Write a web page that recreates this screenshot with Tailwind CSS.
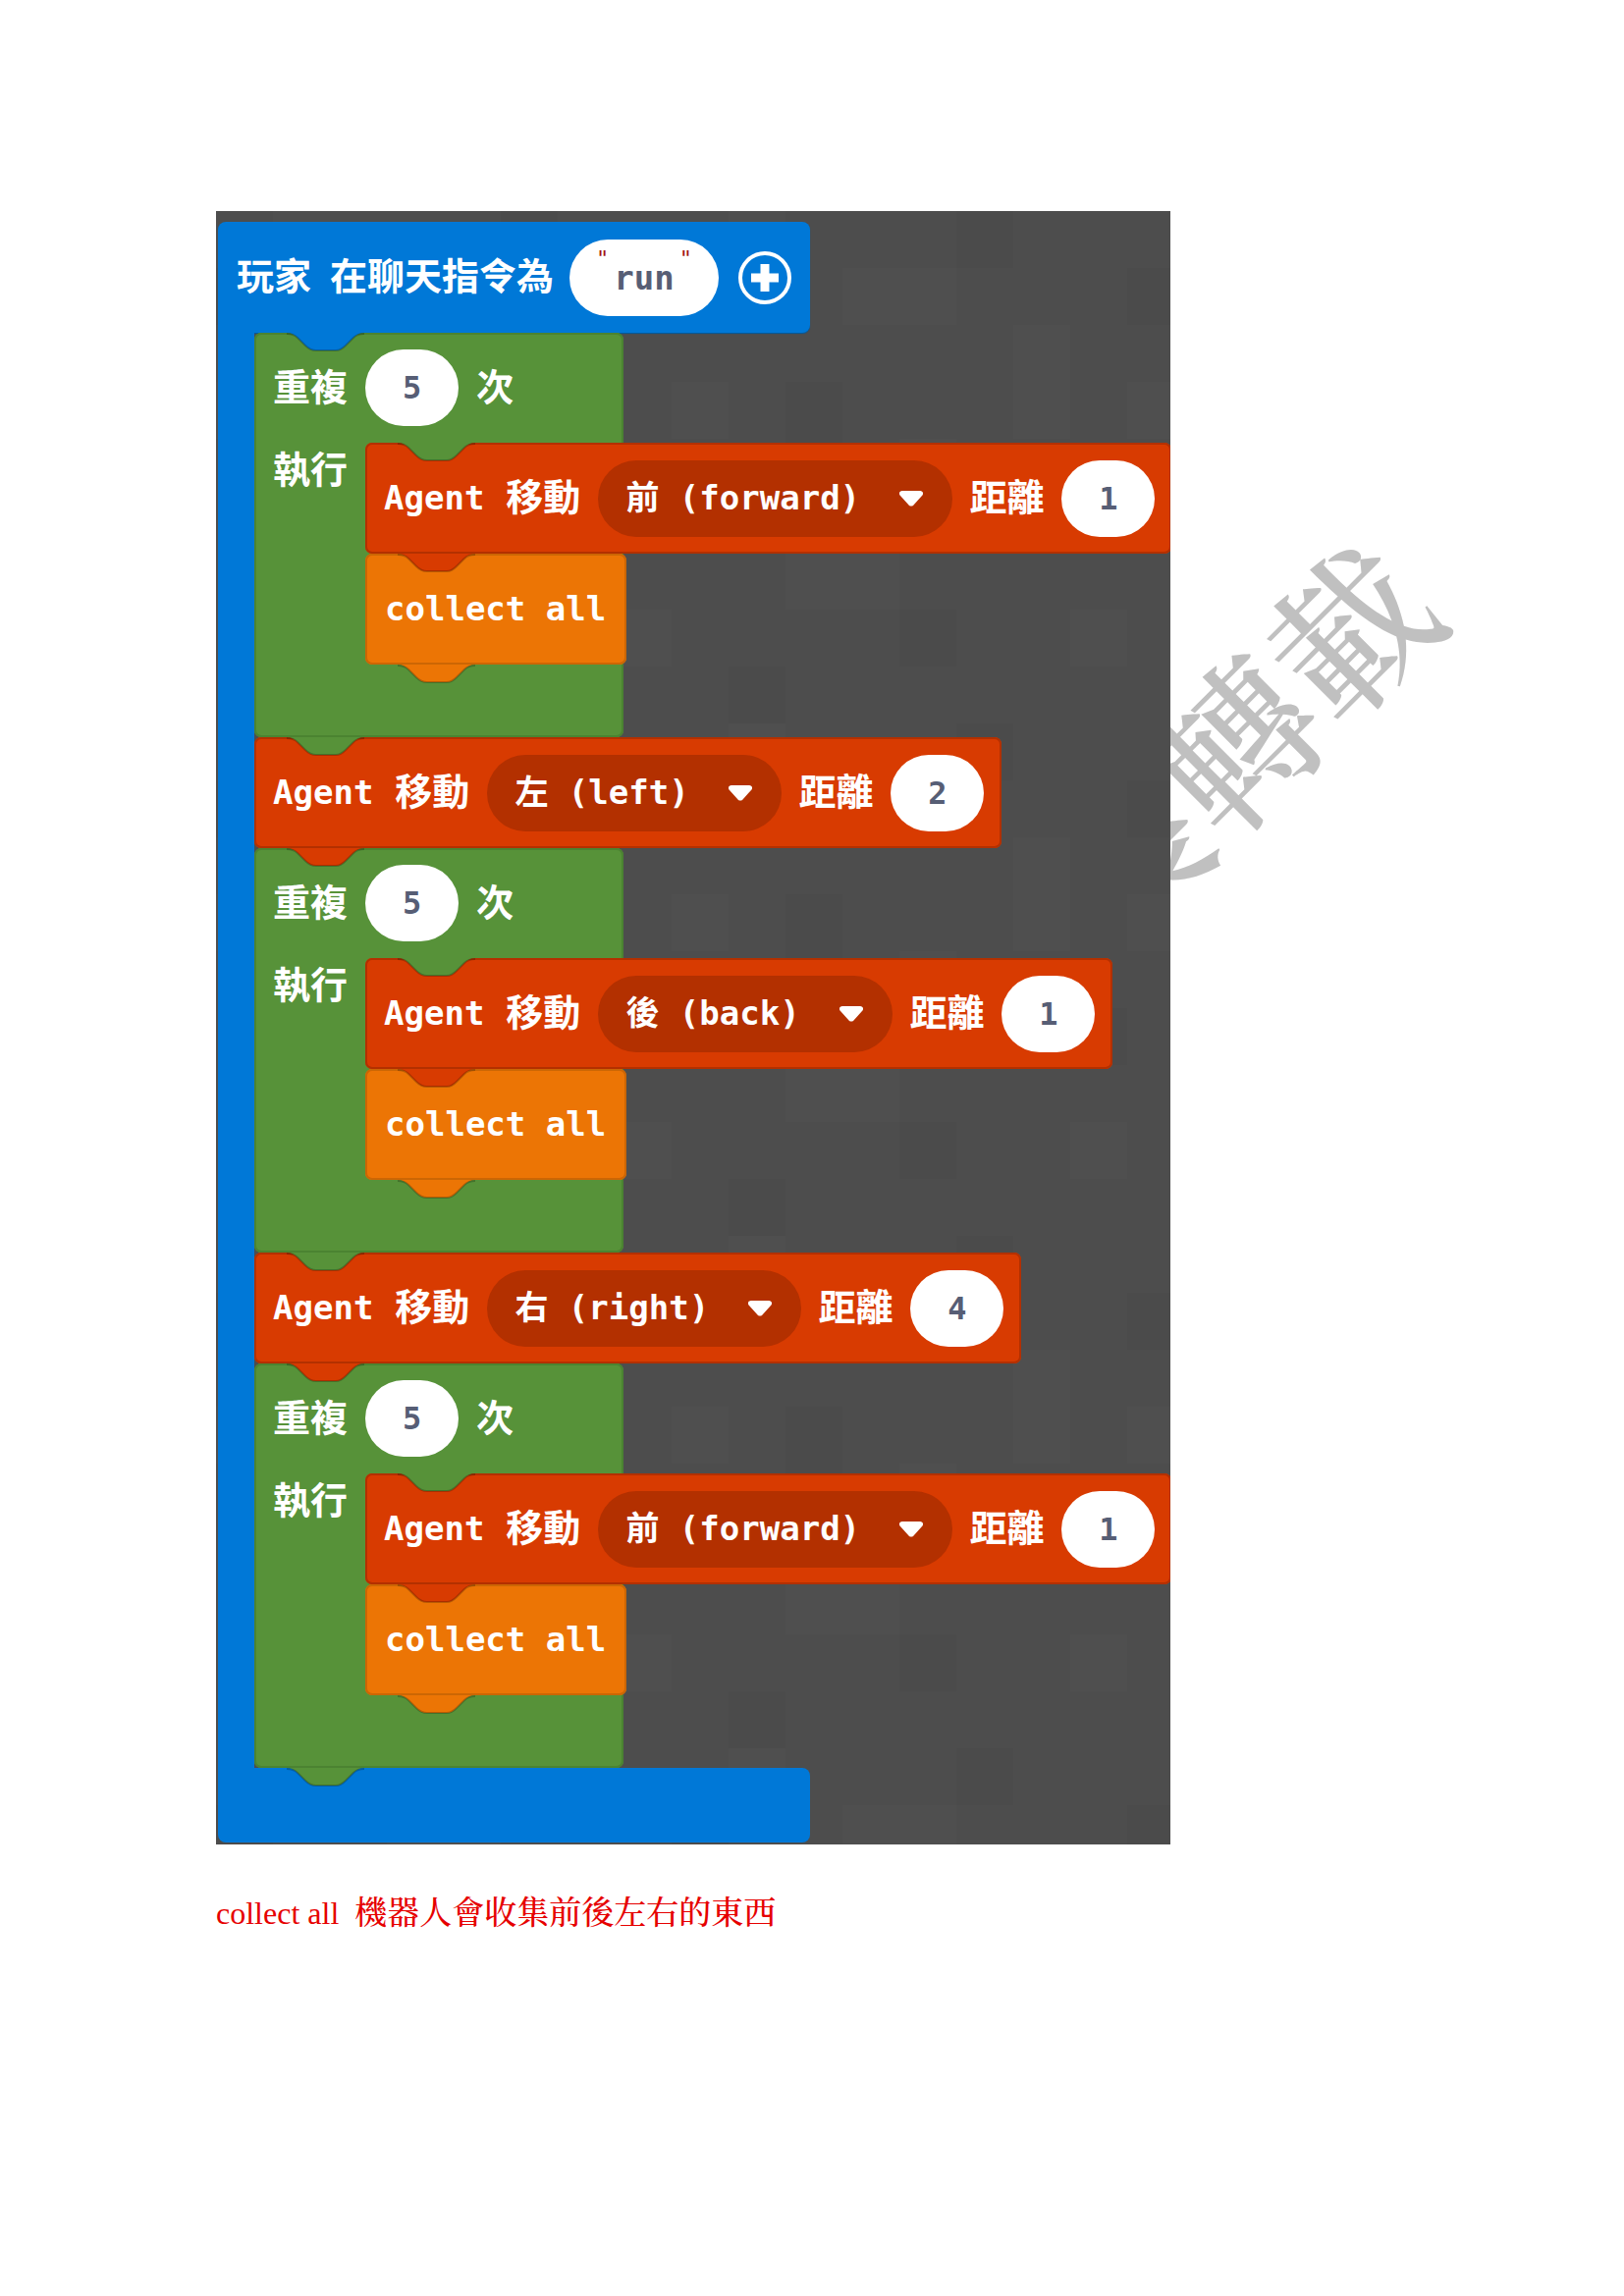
<!DOCTYPE html>
<html lang="zh-Hant">
<head>
<meta charset="utf-8">
<meta name="viewport" content="width=device-width, initial-scale=1">
<title>collect all</title>
<script src="https://cdn.jsdelivr.net/npm/@tailwindcss/browser@4"></script>
</head>
<body class="min-h-screen bg-white">
<svg class="hidden" aria-hidden="true">
  <symbol id="tab" viewBox="0 0 79 20">
    <path d="M0 0C5 0 8 2 11 5L19 13C22 16 25 18 30 18H50C54 18 57 16 60 13L68 5C71 2 74 0 79 0Z"/>
    <path d="M0 1C5 1 8 2 11 5L19 13C22 16 25 18 30 18H50C54 18 57 16 60 13L68 5C71 2 74 1 79 1" fill="none" stroke="#000" stroke-opacity=".22" stroke-width="2"/>
  </symbol>
  <symbol id="caret" viewBox="0 0 24 16">
    <path d="M3 0H21C24 0 25 3 23 5L14 15Q12 16 10 15L1 5C-1 3 0 0 3 0Z"/>
  </symbol>
</svg>
<main class="relative px-[220px] pt-[215px] pb-20">
  <div class="relative max-w-[972px]">
    <p aria-hidden="true" class="absolute left-[790px] top-[457px] w-[489px] -rotate-45 whitespace-nowrap font-['Noto_Serif_CJK_TC','Noto_Sans_CJK_TC',serif] text-[163px] leading-[163px] font-medium text-[#c0c0c0]">製轉載</p>

    <section class="relative overflow-hidden bg-[#4d4d4d] pt-[11px] pb-[2px] pl-[2px] font-['DejaVu_Sans_Mono','Noto_Sans_CJK_TC',monospace] text-[34px] font-bold whitespace-nowrap text-white">
      <svg class="absolute inset-0 h-full w-full" aria-hidden="true">
        <defs>
          <pattern id="squares" width="464" height="522" patternUnits="userSpaceOnUse">
            <g fill="#fff" fill-opacity=".012"><rect x="58" y="0" width="58" height="58"/><rect x="174" y="58" width="116" height="58"/><rect x="348" y="116" width="58" height="116"/><rect x="0" y="174" width="58" height="58"/><rect x="232" y="232" width="58" height="58"/><rect x="116" y="348" width="116" height="58"/><rect x="406" y="406" width="58" height="58"/></g>
            <g fill="#000" fill-opacity=".02"><rect x="0" y="58" width="58" height="58"/><rect x="290" y="0" width="58" height="58"/><rect x="116" y="174" width="58" height="116"/><rect x="348" y="290" width="116" height="58"/><rect x="232" y="406" width="58" height="58"/><rect x="58" y="464" width="58" height="58"/></g>
          </pattern>
        </defs>
        <rect width="100%" height="100%" fill="url(#squares)"/>
      </svg>

      <!-- Event block -->
      <div class="relative w-[603px]">
        <header class="flex h-[113px] items-center rounded-t-[8px] rounded-br-[8px] bg-[#0078d7] pl-[19px] shadow-[0_1px_1px_#005a9e]">
          <span class="text-[38px]">玩家</span>
          <label for="command" class="ml-[19px] text-[38px]">在聊天指令為</label>
          <span class="relative ml-[16px] flex">
            <input id="command" value="run" class="h-[78px] w-[152px] rounded-full bg-white text-center font-bold text-[#575e75] outline-none">
            <span class="absolute top-[6px] left-[27px] text-[22px] leading-[28px] font-normal text-[#a31515]">"</span>
            <span class="absolute top-[6px] right-[27px] text-[22px] leading-[28px] font-normal text-[#a31515]">"</span>
          </span>
          <button aria-label="新增參數" class="ml-[20px]">
            <svg class="size-[54px]" viewBox="0 0 54 54" fill="none" stroke="#fff"><circle cx="27" cy="27" r="25" stroke-width="4"/><path d="M27 13V41M13 27H41" stroke-width="9" stroke-linejoin="round"/></svg>
          </button>
        </header>

        <div class="border-l-[37px] border-[#0078d7]">
          <!-- Loop: forward -->
          <div class="relative h-[412px] w-[376px] rounded-[7px] bg-[#579239] inset-ring-2 inset-ring-[#4b8331]">
            <svg class="absolute top-0 left-[33px] h-[20px] w-[79px] fill-[#0078d7]"><use href="#tab"/></svg>
            <div class="flex h-[112px] items-center gap-[18px] pl-[19px] text-[38px]">
              <label for="n1">重複</label>
              <input id="n1" value="5" class="h-[78px] w-[95px] rounded-full bg-white text-center text-[32px] text-[#575e75] outline-none">
              <span lang="ja" class="font-['DejaVu_Sans_Mono','Noto_Sans_CJK_JP',sans-serif]">次</span>
            </div>
            <div class="flex">
              <span class="h-[56px] w-[113px] shrink-0 pl-[19px] text-[38px] leading-[56px]">執行</span>
              <div>
                <div class="relative flex h-[113px] w-max items-center rounded-[7px] bg-[#d83b01] pr-[17px] pl-[19px] inset-ring-2 inset-ring-[#b33000]">
                  <svg class="absolute top-0 left-[33px] h-[20px] w-[79px] fill-[#579239]"><use href="#tab"/></svg>
                  <span>Agent</span>
                  <label for="d1" class="ml-[22px] text-[38px]">移動</label>
                  <span class="relative ml-[18px] flex">
                    <select id="d1" class="h-[78px] w-[361px] appearance-none rounded-full bg-[#b33000] pl-[28px] outline-none"><option>前 (forward)</option></select>
                    <svg class="pointer-events-none absolute top-[31px] right-[30px] h-[16px] w-[24px] fill-white"><use href="#caret"/></svg>
                  </span>
                  <label for="s1" class="ml-[17px] text-[38px]">距離</label>
                  <input id="s1" value="1" class="ml-[18px] h-[78px] w-[95px] rounded-full bg-white text-center text-[32px] text-[#575e75] outline-none">
                </div>
                <div class="relative flex h-[113px] w-[266px] items-center rounded-[7px] bg-[#ec7505] pl-[20px] inset-ring-2 inset-ring-[#cc6604]">
                  <svg class="absolute top-0 left-[33px] h-[20px] w-[79px] fill-[#d83b01]"><use href="#tab"/></svg>
                  <span>collect all</span>
                </div>
                <svg class="relative ml-[33px] h-[20px] w-[79px] fill-[#ec7505]"><use href="#tab"/></svg>
              </div>
            </div>
          </div>

          <!-- Move left -->
          <div class="relative flex h-[113px] w-max items-center rounded-[7px] bg-[#d83b01] pr-[18px] pl-[19px] inset-ring-2 inset-ring-[#b33000]">
            <svg class="absolute top-0 left-[33px] h-[20px] w-[79px] fill-[#579239]"><use href="#tab"/></svg>
            <span>Agent</span>
            <label for="d2" class="ml-[22px] text-[38px]">移動</label>
            <span class="relative ml-[18px] flex">
              <select id="d2" class="h-[78px] w-[300px] appearance-none rounded-full bg-[#b33000] pl-[28px] outline-none"><option>左 (left)</option></select>
              <svg class="pointer-events-none absolute top-[31px] right-[30px] h-[16px] w-[24px] fill-white"><use href="#caret"/></svg>
            </span>
            <label for="s2" class="ml-[17px] text-[38px]">距離</label>
            <input id="s2" value="2" class="ml-[18px] h-[78px] w-[95px] rounded-full bg-white text-center text-[32px] text-[#575e75] outline-none">
          </div>

          <!-- Loop: back -->
          <div class="relative h-[412px] w-[376px] rounded-[7px] bg-[#579239] inset-ring-2 inset-ring-[#4b8331]">
            <svg class="absolute top-0 left-[33px] h-[20px] w-[79px] fill-[#d83b01]"><use href="#tab"/></svg>
            <div class="flex h-[112px] items-center gap-[18px] pl-[19px] text-[38px]">
              <label for="n2">重複</label>
              <input id="n2" value="5" class="h-[78px] w-[95px] rounded-full bg-white text-center text-[32px] text-[#575e75] outline-none">
              <span lang="ja" class="font-['DejaVu_Sans_Mono','Noto_Sans_CJK_JP',sans-serif]">次</span>
            </div>
            <div class="flex">
              <span class="h-[56px] w-[113px] shrink-0 pl-[19px] text-[38px] leading-[56px]">執行</span>
              <div>
                <div class="relative flex h-[113px] w-max items-center rounded-[7px] bg-[#d83b01] pr-[18px] pl-[19px] inset-ring-2 inset-ring-[#b33000]">
                  <svg class="absolute top-0 left-[33px] h-[20px] w-[79px] fill-[#579239]"><use href="#tab"/></svg>
                  <span>Agent</span>
                  <label for="d3" class="ml-[22px] text-[38px]">移動</label>
                  <span class="relative ml-[18px] flex">
                    <select id="d3" class="h-[78px] w-[300px] appearance-none rounded-full bg-[#b33000] pl-[28px] outline-none"><option>後 (back)</option></select>
                    <svg class="pointer-events-none absolute top-[31px] right-[30px] h-[16px] w-[24px] fill-white"><use href="#caret"/></svg>
                  </span>
                  <label for="s3" class="ml-[17px] text-[38px]">距離</label>
                  <input id="s3" value="1" class="ml-[18px] h-[78px] w-[95px] rounded-full bg-white text-center text-[32px] text-[#575e75] outline-none">
                </div>
                <div class="relative flex h-[113px] w-[266px] items-center rounded-[7px] bg-[#ec7505] pl-[20px] inset-ring-2 inset-ring-[#cc6604]">
                  <svg class="absolute top-0 left-[33px] h-[20px] w-[79px] fill-[#d83b01]"><use href="#tab"/></svg>
                  <span>collect all</span>
                </div>
                <svg class="relative ml-[33px] h-[20px] w-[79px] fill-[#ec7505]"><use href="#tab"/></svg>
              </div>
            </div>
          </div>

          <!-- Move right -->
          <div class="relative flex h-[113px] w-max items-center rounded-[7px] bg-[#d83b01] pr-[18px] pl-[19px] inset-ring-2 inset-ring-[#b33000]">
            <svg class="absolute top-0 left-[33px] h-[20px] w-[79px] fill-[#579239]"><use href="#tab"/></svg>
            <span>Agent</span>
            <label for="d4" class="ml-[22px] text-[38px]">移動</label>
            <span class="relative ml-[18px] flex">
              <select id="d4" class="h-[78px] w-[320px] appearance-none rounded-full bg-[#b33000] pl-[28px] outline-none"><option>右 (right)</option></select>
              <svg class="pointer-events-none absolute top-[31px] right-[30px] h-[16px] w-[24px] fill-white"><use href="#caret"/></svg>
            </span>
            <label for="s4" class="ml-[17px] text-[38px]">距離</label>
            <input id="s4" value="4" class="ml-[18px] h-[78px] w-[95px] rounded-full bg-white text-center text-[32px] text-[#575e75] outline-none">
          </div>

          <!-- Loop: forward again -->
          <div class="relative h-[412px] w-[376px] rounded-[7px] bg-[#579239] inset-ring-2 inset-ring-[#4b8331]">
            <svg class="absolute top-0 left-[33px] h-[20px] w-[79px] fill-[#d83b01]"><use href="#tab"/></svg>
            <div class="flex h-[112px] items-center gap-[18px] pl-[19px] text-[38px]">
              <label for="n3">重複</label>
              <input id="n3" value="5" class="h-[78px] w-[95px] rounded-full bg-white text-center text-[32px] text-[#575e75] outline-none">
              <span lang="ja" class="font-['DejaVu_Sans_Mono','Noto_Sans_CJK_JP',sans-serif]">次</span>
            </div>
            <div class="flex">
              <span class="h-[56px] w-[113px] shrink-0 pl-[19px] text-[38px] leading-[56px]">執行</span>
              <div>
                <div class="relative flex h-[113px] w-max items-center rounded-[7px] bg-[#d83b01] pr-[17px] pl-[19px] inset-ring-2 inset-ring-[#b33000]">
                  <svg class="absolute top-0 left-[33px] h-[20px] w-[79px] fill-[#579239]"><use href="#tab"/></svg>
                  <span>Agent</span>
                  <label for="d5" class="ml-[22px] text-[38px]">移動</label>
                  <span class="relative ml-[18px] flex">
                    <select id="d5" class="h-[78px] w-[361px] appearance-none rounded-full bg-[#b33000] pl-[28px] outline-none"><option>前 (forward)</option></select>
                    <svg class="pointer-events-none absolute top-[31px] right-[30px] h-[16px] w-[24px] fill-white"><use href="#caret"/></svg>
                  </span>
                  <label for="s5" class="ml-[17px] text-[38px]">距離</label>
                  <input id="s5" value="1" class="ml-[18px] h-[78px] w-[95px] rounded-full bg-white text-center text-[32px] text-[#575e75] outline-none">
                </div>
                <div class="relative flex h-[113px] w-[266px] items-center rounded-[7px] bg-[#ec7505] pl-[20px] inset-ring-2 inset-ring-[#cc6604]">
                  <svg class="absolute top-0 left-[33px] h-[20px] w-[79px] fill-[#d83b01]"><use href="#tab"/></svg>
                  <span>collect all</span>
                </div>
                <svg class="relative ml-[33px] h-[20px] w-[79px] fill-[#ec7505]"><use href="#tab"/></svg>
              </div>
            </div>
          </div>
        </div>

        <footer class="relative h-[76px] rounded-b-[8px] rounded-tr-[8px] bg-[#0078d7]">
          <svg class="absolute top-0 left-[70px] h-[20px] w-[79px] fill-[#579239]"><use href="#tab"/></svg>
        </footer>
      </div>
    </section>

    <p class="relative mt-[43px] flex items-baseline gap-[16px] whitespace-nowrap text-[33px] leading-[48px] text-[#e60000]">
      <span class="font-['Liberation_Serif',serif] text-[32px]">collect all</span>
      <span class="font-['Noto_Serif_CJK_TC','Noto_Sans_CJK_TC',serif] font-medium">機器人會收集前後左右的東西</span>
    </p>
  </div>
</main>
</body>
</html>
